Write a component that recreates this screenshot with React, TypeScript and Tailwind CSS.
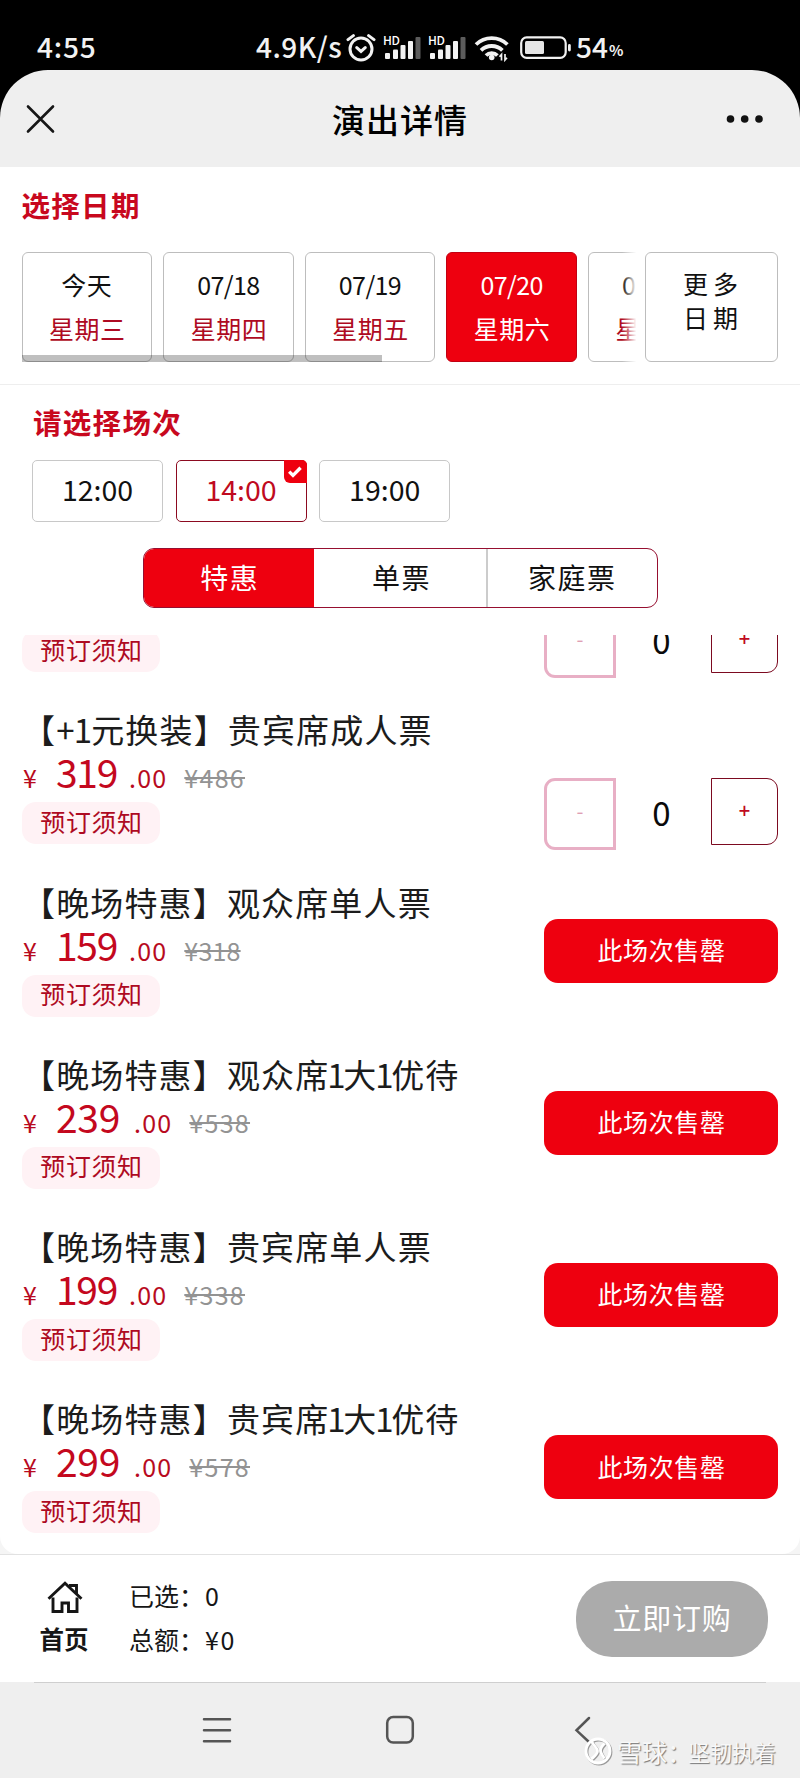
import clsx from "clsx";

interface ITicket {
  id: number;
  name?: string;
  price?: string;
  original?: string;
  soldOut: boolean;
}

const DATES = [
  { label: "今天", week: "星期三" },
  { label: "07/18", week: "星期四" },
  { label: "07/19", week: "星期五" },
  { label: "07/20", week: "星期六" },
  { label: "07/21", week: "星期日" },
];
const SELECTED_DATE = "07/20";

const SESSIONS = ["12:00", "14:00", "19:00"];
const SELECTED_SESSION = "14:00";

const TABS = ["特惠", "单票", "家庭票"];
const SELECTED_TAB = "特惠";

const TICKETS: ITicket[] = [
  { id: 1, soldOut: false },
  { id: 2, name: "【+1元换装】贵宾席成人票", price: "319", original: "¥486", soldOut: false },
  { id: 3, name: "【晚场特惠】观众席单人票", price: "159", original: "¥318", soldOut: true },
  { id: 4, name: "【晚场特惠】观众席1大1优待", price: "239", original: "¥538", soldOut: true },
  { id: 5, name: "【晚场特惠】贵宾席单人票", price: "199", original: "¥338", soldOut: true },
  { id: 6, name: "【晚场特惠】贵宾席1大1优待", price: "299", original: "¥578", soldOut: true },
];

function SignalIcon() {
  return (
    <svg width="38" height="26" viewBox="0 0 38 26" className="block overflow-visible">
      <text x="-1" y="10.500" fontSize="12" fontWeight="500" fill="#fff" textLength="17">
        HD
      </text>
      <g fill="#f2f2f2">
        <rect x="1" y="19" width="5" height="6" rx="1" />
        <rect x="9" y="15.500" width="5" height="9.500" rx="1" />
        <rect x="16.500" y="11" width="5" height="14" rx="1" />
        <rect x="24" y="7" width="5" height="18" rx="1" />
      </g>
      <rect x="31.500" y="3" width="5" height="22" rx="1" fill="#5c5c5c" />
    </svg>
  );
}

function StatusBar() {
  return (
    <div className="flex h-[70px] items-start pt-[34px] text-[28px] font-medium leading-[25px] text-[#f2f2f2]">
      <span className="ml-[37px] w-[219px] tracking-[0.800px]">4:55</span>
      <span className="w-[89px] whitespace-nowrap tracking-[0.500px]">4.9K/s</span>
      <svg width="32" height="28" viewBox="0 0 30 28" fill="none" stroke="#f2f2f2" strokeWidth="3" strokeLinecap="round">
        <circle cx="15" cy="15" r="11" />
        <path d="M10.800 13.600 15 17.400l4.200-3.800M2 5.600 7.400 1.600M28 5.600 22.600 1.600" />
      </svg>
      <div className="ml-[7px]">
        <SignalIcon />
      </div>
      <div className="ml-[7px]">
        <SignalIcon />
      </div>
      <svg className="ml-[7px]" width="36" height="28" viewBox="0 0 36 28" fill="none" stroke="#f2f2f2" strokeWidth="3.800">
        <path d="M2 10.500a22.500 22.500 0 0 1 31.400 0M7 16.300a15.500 15.500 0 0 1 21.400 0M12 21.500a8 8 0 0 1 11.400 0" />
        <circle cx="17.700" cy="23.500" r="2.800" fill="#f2f2f2" stroke="none" />
        <path d="M27.500 26.500v-6l-2 2.200M31 20v6l2-2.200" strokeWidth="1.700" />
      </svg>
      <svg className="ml-[9px]" width="54" height="28" viewBox="0 0 54 28">
        <rect x="2.200" y="3.400" width="44.500" height="20.400" rx="5.500" fill="none" stroke="#f2f2f2" strokeWidth="2.200" />
        <rect x="6" y="7" width="19" height="13" rx="1.500" fill="#e6e6e6" />
        <rect x="49" y="10" width="2.800" height="7.500" rx="1.400" fill="#f2f2f2" />
      </svg>
      <span className="ml-[3px]">54</span>
      <span className="ml-px mt-[3px] text-[15px] font-bold">%</span>
    </div>
  );
}

function Header() {
  return (
    <header className="grid h-[97px] grid-cols-3 items-center rounded-t-[48px] bg-[#efefef] px-[26px]">
      <svg width="30" height="30" viewBox="0 0 30 30" stroke="#161616" strokeWidth="2.600" strokeLinecap="round">
        <path d="M2 2.500 27 27.500M27 2.500 2 27.500" />
      </svg>
      <h1 className="whitespace-nowrap text-center text-[33px] font-medium leading-[40px] tracking-[1px] text-black">
        演出详情
      </h1>
      <svg className="ml-auto mr-[10px]" width="38" height="10" viewBox="0 0 38 10" fill="#111">
        <circle cx="4.500" cy="5" r="3.800" />
        <circle cx="18.700" cy="5" r="3.800" />
        <circle cx="33" cy="5" r="3.800" />
      </svg>
    </header>
  );
}

function DatePicker() {
  return (
    <section className="h-[218px] border-b border-[#eeeeee] pl-[21.500px] pt-[19px]">
      <h2 className="text-[28.500px] font-bold leading-[38px] tracking-[1.300px] text-[#c8081e]">选择日期</h2>
      <div className="mt-[28px] flex">
        <div className="relative w-[618.500px] overflow-hidden">
          <div className="flex gap-[11px]">
            {DATES.map(({ label, week }) => (
              <button
                key={label}
                className={clsx(
                  "h-[110px] w-[130.600px] shrink-0 rounded-[6px] border pb-[3px] text-[25px] tracking-[0.500px]",
                  label === SELECTED_DATE
                    ? "border-[#c20012] bg-[#ee000f] text-white"
                    : "border-[#bdbdbd] bg-white text-[#111]"
                )}
              >
                <span className={clsx("block leading-[44px]", label !== "今天" && "tracking-[-0.600px]")}>{label}</span>
                <span className={clsx("block pl-px leading-[44px]", label !== SELECTED_DATE && "text-[#ae0a22]")}>
                  {week}
                </span>
              </button>
            ))}
          </div>
          {/* Scrollbar */}
          <div className="absolute bottom-0 left-0 h-[7px] w-[360px] bg-black/25"></div>
          {/* Fade on the clipped card */}
          <div className="absolute right-0 top-0 h-full w-[18px] bg-gradient-to-r from-white/0 to-white to-80%"></div>
        </div>
        <button className="ml-[5px] h-[110px] w-[133px] rounded-[6px] border border-[#bdbdbd] pb-[15px] pl-[3px] text-[25px] leading-[34px] tracking-[5px] text-[#111]">
          更多
          <br />
          日期
        </button>
      </div>
    </section>
  );
}

function SessionPicker() {
  return (
    <section className="pl-[32px] pt-[18px]">
      <h2 className="pl-px text-[28.500px] font-bold leading-[38px] tracking-[1.300px] text-[#c8081e]">请选择场次</h2>
      <div className="mt-[19px] flex gap-[12.600px]">
        {SESSIONS.map((time) => {
          const active = time === SELECTED_SESSION;
          return (
            <button
              key={time}
              className={clsx(
                "relative h-[62px] w-[131px] rounded-[5px] border pb-[4px] text-[28.500px]",
                active ? "border-[#8c0a20] text-[#c00a20]" : "border-[#c8c8c8] text-[#111]"
              )}
            >
              {time}
              {active && (
                <span className="absolute -right-px -top-px flex h-[23px] w-[23px] items-center justify-center rounded-bl-[6px] rounded-tr-[5px] bg-[#ee000f]">
                  <svg width="14" height="12" viewBox="0 0 14 12" fill="none" stroke="#fff" strokeWidth="3.400">
                    <path d="M1.200 5.600 5 9.400 12.600 1.800" />
                  </svg>
                </span>
              )}
            </button>
          );
        })}
      </div>
    </section>
  );
}

function TicketTabs() {
  return (
    <div className="mx-auto mt-[26px] flex h-[60px] w-[515px] overflow-hidden rounded-[11px] border-[1.500px] border-[#960f30]">
      {TABS.map((tab) => (
        <button
          key={tab}
          className={clsx(
            "flex-1 pb-[2px] text-[28px] tracking-[1.500px]",
            tab === SELECTED_TAB ? "bg-[#ee000f] pl-[2px] text-white" : "text-[#111]",
            tab === "家庭票" && "border-l-2 border-[#cccccc]",
            tab === "单票" && "pl-[3px]"
          )}
        >
          {tab}
        </button>
      ))}
    </div>
  );
}

function Stepper() {
  return (
    <div className="mt-[72px] flex w-[234px] items-start">
      <button className="h-[72px] w-[72px] rounded-l-[11px] border-3 border-[#e8afc5] pb-[6px] text-[20px] text-[#dfa0b4]">
        -
      </button>
      <span className="w-[91px] text-center text-[33px] leading-[69px] text-[#0a0a0a]">0</span>
      <button className="ml-auto h-[67px] w-[67px] rounded-r-[11px] border border-[#7c0a20] pb-[4px] text-[20px] font-medium text-[#c00a20]">
        +
      </button>
    </div>
  );
}

function TicketName({ name }: { name: string }) {
  return (
    <h3 className="whitespace-nowrap text-[33px] leading-[47px] tracking-[1.150px] text-[#1c1c1c]">
      {name.split(/(\+?\d)/).map((part, i) => (
        <span
          key={i}
          className={clsx(part.startsWith("+") && "tracking-[-0.800px]", /^\d/.test(part) && "-ml-[2px] tracking-[-2.500px]")}
        >
          {part}
        </span>
      ))}
    </h3>
  );
}

function TicketRow({ ticket }: { ticket: ITicket }) {
  const { name, price, original, soldOut } = ticket;
  return (
    <li className="flex h-[172.300px] shrink-0 justify-between px-[22px]">
      <div>
        <div className="h-[48px]">{name && <TicketName name={name} />}</div>
        <div className="h-[48px]">
          {price && (
            <div className="flex items-baseline whitespace-nowrap text-[25px] leading-[34px] text-[#b80a20]">
              <span className="w-[34px] pl-px">¥</span>
              <span
                className={clsx(
                  "text-[39px] text-[#c4081e]",
                  price.includes("1") ? "w-[73px] tracking-[-1.300px]" : "w-[78px] tracking-[-0.300px]"
                )}
              >
                {price}
              </span>
              <span className="tracking-[1.200px]">.00</span>
              <del
                className={clsx(
                  "ml-[17px] text-[#939393]",
                  original?.includes("1") ? "tracking-[0.200px]" : "tracking-[1.300px]"
                )}
              >
                {original}
              </del>
            </div>
          )}
        </div>
        <button className="block h-[42px] w-[138px] rounded-[14px] bg-[#fff2f5] pb-[4px] pl-px text-[25px] leading-[37px] tracking-[0.600px] text-[#ae0a22]">
          预订须知
        </button>
      </div>
      {soldOut ? (
        <button className="mt-[40px] h-[64px] w-[234px] rounded-[14px] bg-[#ee000f] pb-[2px] pl-px text-[25px] tracking-[0.600px] text-white">
          此场次售罄
        </button>
      ) : (
        <Stepper />
      )}
    </li>
  );
}

function OrderBar() {
  return (
    <footer className="border-t border-[#e2e2e2] bg-white">
      <div className="flex h-[127px] items-start pl-[39px] pr-[32px] text-[25px] text-[#161616]">
        <div className="flex w-[50px] flex-col items-center pt-[25px]">
          <svg className="ml-px" width="36" height="34" viewBox="0 0 36 34" fill="none" stroke="#161616" strokeWidth="2.900">
            <path d="M1.500 18.800 18 3.200l16.500 15.600" />
            <path d="M6 17.500V31.500h9V23h6.500v8.500H30V17.500" />
            <path d="M22 5.500h7.500v8.500" />
          </svg>
          <span className="mt-[7px] whitespace-nowrap text-[24.500px] font-bold leading-[36px]">首页</span>
        </div>
        <div className="ml-[40px] pt-[19px] leading-[43.500px]">
          <div className="flex">
            <span className="w-[76px]">已选：</span>
            <span>0</span>
          </div>
          <div className="flex">
            <span className="w-[76px]">总额：</span>
            <span className="tracking-[1.500px]">¥0</span>
          </div>
        </div>
        <button className="ml-auto mt-[26px] h-[76px] w-[192px] rounded-[36px] bg-[#ababab] pb-[2px] text-[29px] tracking-[0.800px] text-white">
          立即订购
        </button>
      </div>
    </footer>
  );
}

function NavBar() {
  return (
    <nav className="relative flex h-[96px] justify-between bg-[#efefef] px-[34px]">
      <div className="w-full border-t border-[#cfcfcf]">
        <svg width="732" height="60" viewBox="34 1683 732 60" className="overflow-visible" fill="none" stroke="#555" strokeWidth="2.500" strokeLinecap="round">
          <path d="M204 1719.300h26M204 1730.300h26M204 1741.300h26" />
          <rect x="387.200" y="1717" width="25.600" height="25.600" rx="6" />
          <path d="M589 1718 576.500 1730.300 589 1742" />
        </svg>
      </div>
      {/* Watermark */}
      <div className="absolute bottom-[10px] left-[584px] flex items-center whitespace-nowrap leading-[34px] text-[#f8f8f8] [text-shadow:1px_1px_1px_#777]">
        <svg width="29" height="30" viewBox="0 0 29 30" fill="none" className="overflow-visible">
          <g stroke="#999" strokeWidth="2.800" transform="translate(1 1)">
            <circle cx="14" cy="15" r="12" />
            <path d="M7.500 4.500c1 5 6 7 6 10.500s-4 6-6 8M20.500 7.500c-2 2-4 4.500-4 7s2 5 4 8" />
          </g>
          <g stroke="#fff" strokeWidth="2.800">
            <circle cx="14" cy="15" r="12" />
            <path d="M7.500 4.500c1 5 6 7 6 10.500s-4 6-6 8M20.500 7.500c-2 2-4 4.500-4 7s2 5 4 8" />
          </g>
        </svg>
        <span className="ml-[4px] w-[71px] text-[25px]">雪球：</span>
        <span className="text-[22px]">坚韧执着</span>
      </div>
    </nav>
  );
}

export default function App() {
  return (
    <div className="h-[1778px] w-[800px] overflow-hidden bg-black font-['Noto_Sans_CJK_SC',sans-serif]">
      <StatusBar />
      <Header />
      <main className="flex h-[1387px] flex-col bg-[#f5f5f5]">
        <div className="flex min-h-0 flex-1 flex-col overflow-hidden rounded-b-[18px] bg-white">
          <DatePicker />
          <SessionPicker />
          <TicketTabs />
          <div className="mt-[27px] min-h-0 flex-1 overflow-hidden">
            <ul className="-mt-[101px] flex flex-col">
              {TICKETS.map((ticket) => (
                <TicketRow key={ticket.id} ticket={ticket} />
              ))}
            </ul>
          </div>
        </div>
      </main>
      <OrderBar />
      <NavBar />
    </div>
  );
}
